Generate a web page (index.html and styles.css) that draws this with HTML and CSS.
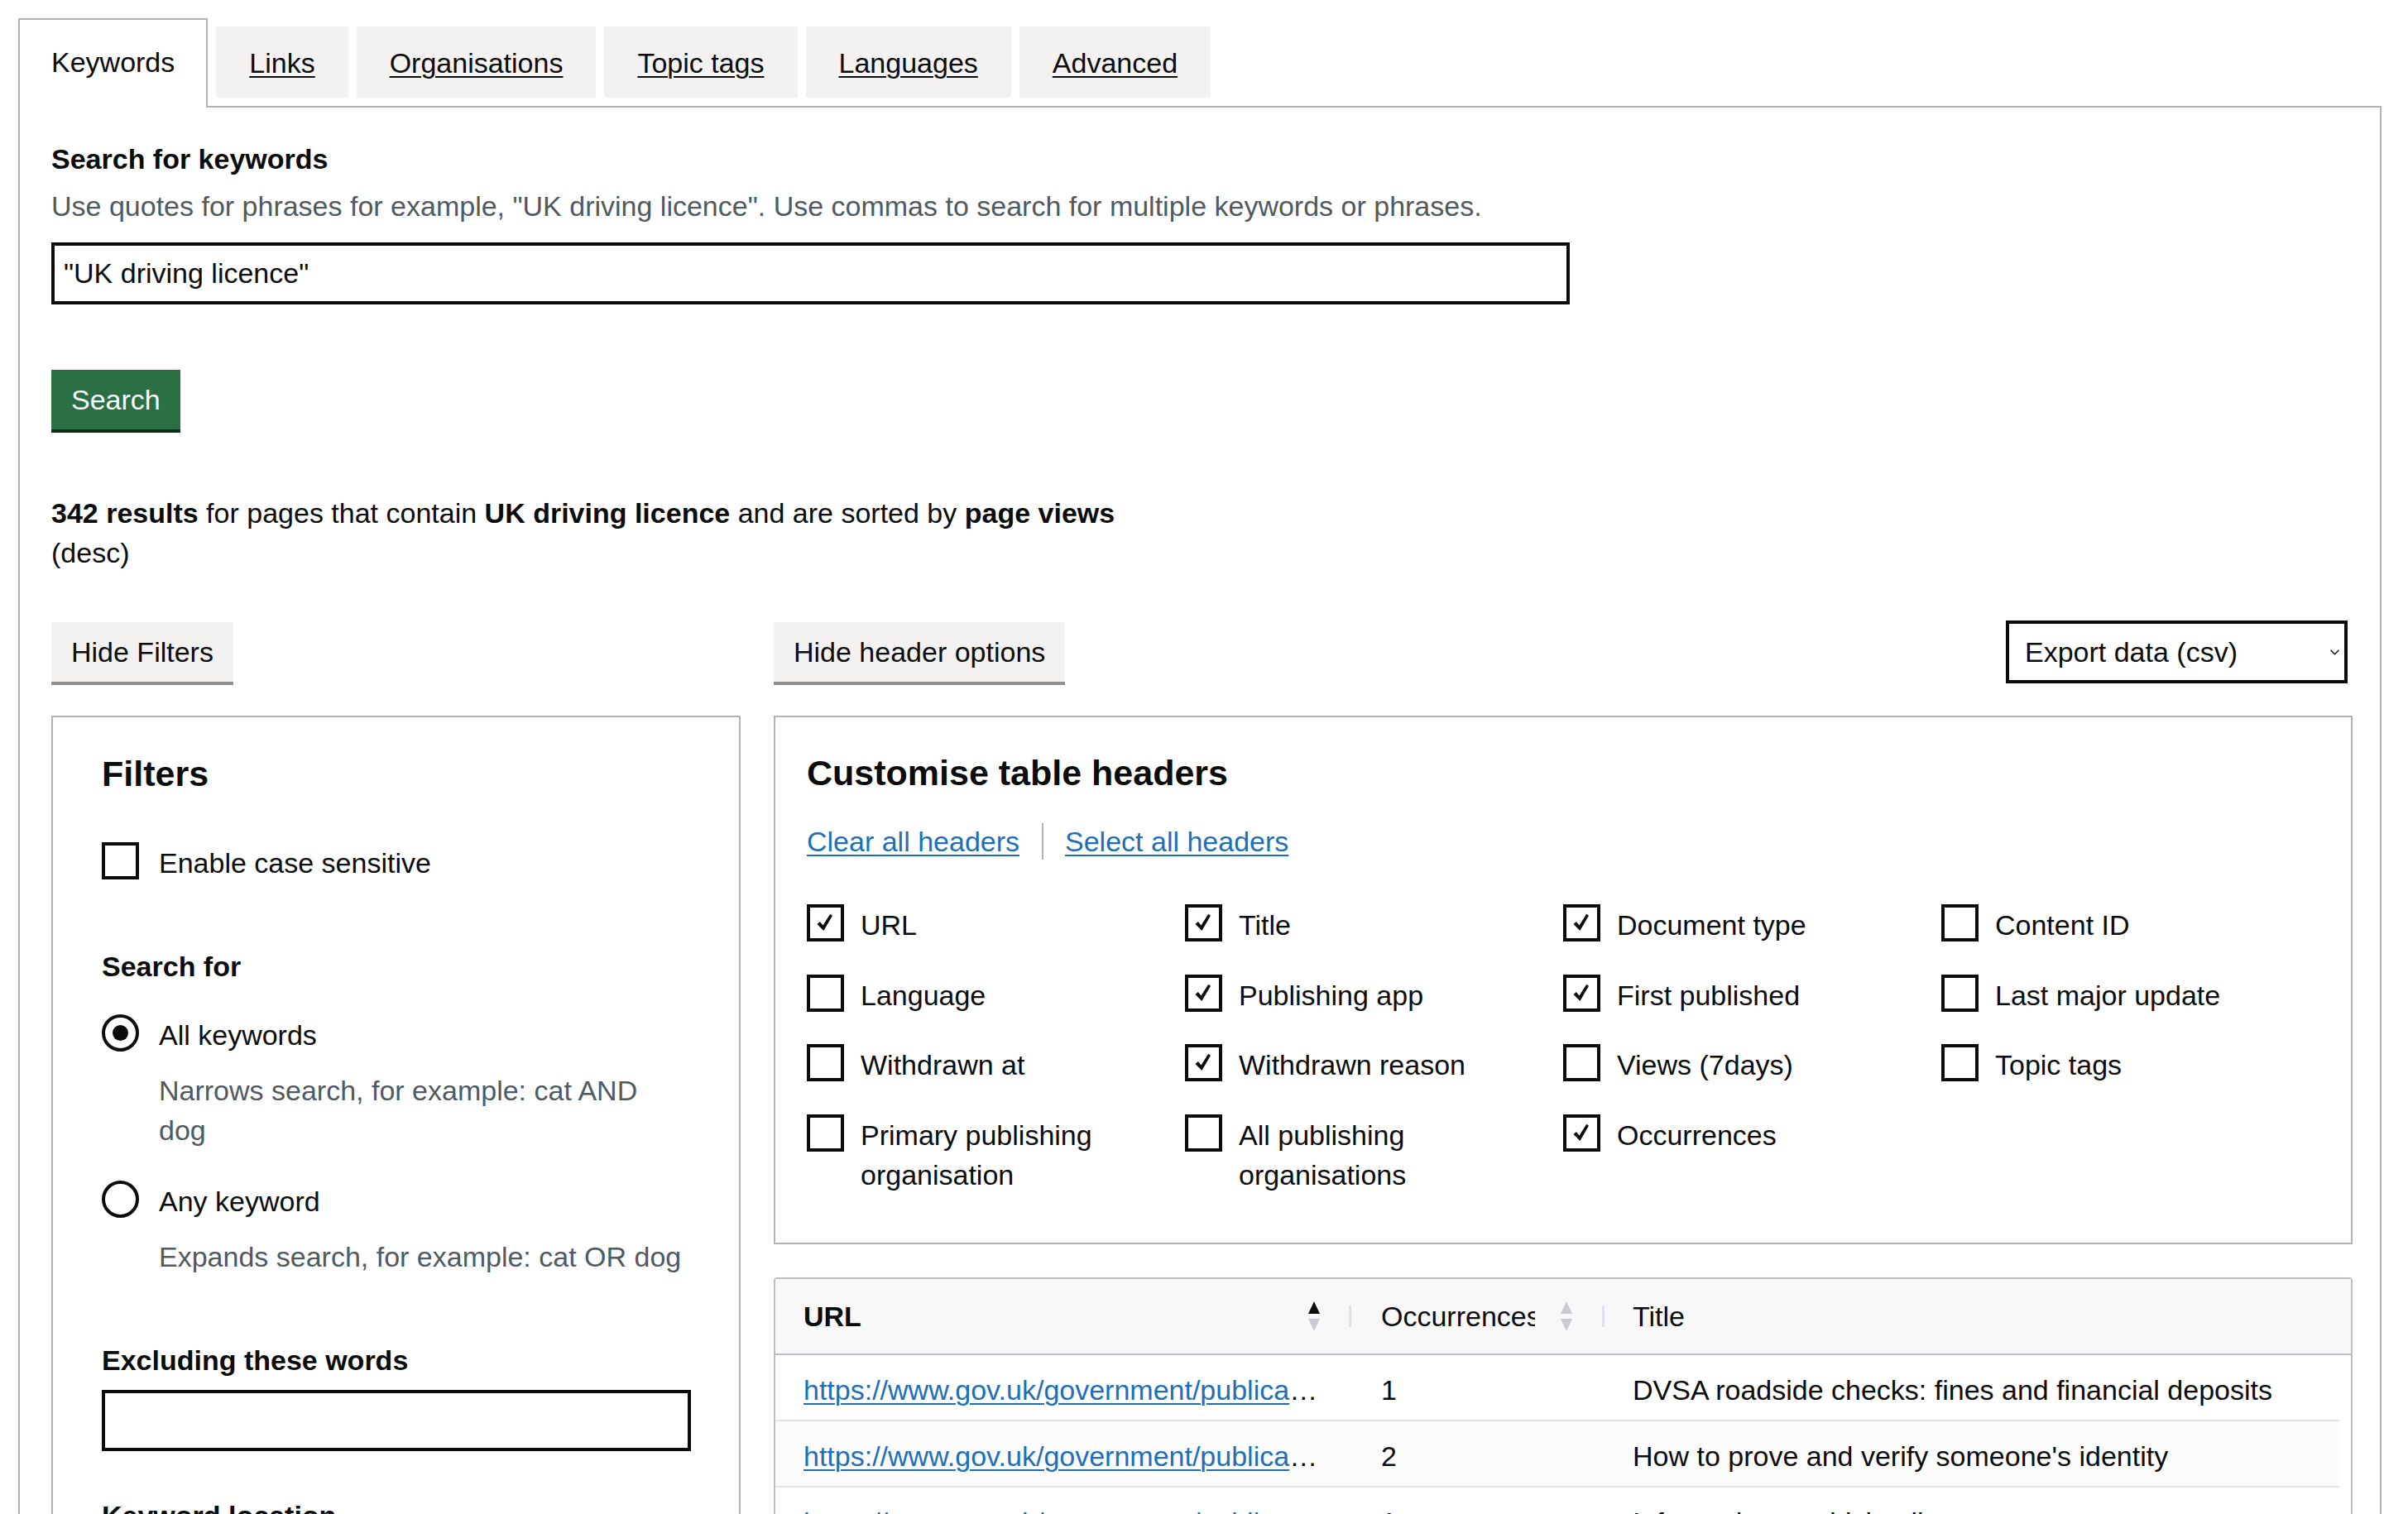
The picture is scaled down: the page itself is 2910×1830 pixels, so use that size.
FILE: index.html
```html
<!DOCTYPE html>
<html lang="en">
<head>
<meta charset="utf-8">
<title>Search for keywords</title>
<link rel="stylesheet" href="styles.css">
</head>
<body>
<div class="page">
  <ul class="tabs">
    <li class="tab tab--selected">Keywords</li>
    <li class="tab"><a class="tab__link" href="#">Links</a></li>
    <li class="tab"><a class="tab__link" href="#">Organisations</a></li>
    <li class="tab"><a class="tab__link" href="#">Topic tags</a></li>
    <li class="tab"><a class="tab__link" href="#">Languages</a></li>
    <li class="tab"><a class="tab__link" href="#">Advanced</a></li>
  </ul>

  <section class="panel">
    <form class="search-form">
      <label class="label label--bold" for="keywords">Search for keywords</label>
      <p class="hint hint--search">Use quotes for phrases for example, "UK driving licence". Use commas to search for multiple keywords or phrases.</p>
      <input class="text-input text-input--search" id="keywords" type="text" value="&quot;UK driving licence&quot;">
      <div class="form-actions">
        <button class="button button--primary" type="button">Search</button>
      </div>
    </form>

    <p class="summary"><strong>342 results</strong> for pages that contain <strong>UK driving licence</strong> and are sorted by <strong>page views</strong> (desc)</p>

    <div class="layout">
      <div class="toolbar toolbar--left">
        <button class="button button--secondary" type="button">Hide Filters</button>
      </div>
      <div class="toolbar toolbar--right">
        <button class="button button--secondary" type="button">Hide header options</button>
        <div class="export">
          <select class="select" aria-label="Export">
            <option>Export data (csv)</option>
          </select>
          <svg class="export__chevron" viewBox="0 0 10 6" width="11" height="7" aria-hidden="true"><path d="M0.5 0.5 L5 5 L9.5 0.5" fill="none" stroke="#0b0c0c" stroke-width="1.2"/></svg>
        </div>
      </div>

      <aside class="filters">
        <h2 class="heading">Filters</h2>
        <div class="choice choice--single">
          <span class="checkbox"></span>
          <span class="choice__label">Enable case sensitive</span>
        </div>

        <fieldset class="fieldset">
          <legend class="label label--bold legend">Search for</legend>
          <div class="choice">
            <span class="radio radio--checked"></span>
            <span class="choice__label">All keywords</span>
            <span class="choice__hint">Narrows search, for example: cat AND dog</span>
          </div>
          <div class="choice choice--second">
            <span class="radio"></span>
            <span class="choice__label">Any keyword</span>
            <span class="choice__hint">Expands search, for example: cat OR dog</span>
          </div>
        </fieldset>

        <label class="label label--bold label--exclude" for="exclude">Excluding these words</label>
        <input class="text-input text-input--exclude" id="exclude" type="text">

        <p class="label label--bold label--location">Keyword location</p>
      </aside>

      <div class="results">
        <div class="customise">
          <h2 class="heading">Customise table headers</h2>
          <div class="header-actions">
            <a class="link" href="#">Clear all headers</a>
            <span class="header-actions__sep"></span>
            <a class="link" href="#">Select all headers</a>
          </div>
          <div class="columns">
            <div class="col-choice"><span class="checkbox checkbox--checked"><svg viewBox="0 0 20 20"><path d="M2 11.2 L4.7 8.8 L7.6 12.4 L14.6 1.4 L16.8 2.9 L8.3 17.6 Z"/></svg></span><span class="col-choice__label">URL</span></div>
            <div class="col-choice"><span class="checkbox checkbox--checked"><svg viewBox="0 0 20 20"><path d="M2 11.2 L4.7 8.8 L7.6 12.4 L14.6 1.4 L16.8 2.9 L8.3 17.6 Z"/></svg></span><span class="col-choice__label">Title</span></div>
            <div class="col-choice"><span class="checkbox checkbox--checked"><svg viewBox="0 0 20 20"><path d="M2 11.2 L4.7 8.8 L7.6 12.4 L14.6 1.4 L16.8 2.9 L8.3 17.6 Z"/></svg></span><span class="col-choice__label">Document type</span></div>
            <div class="col-choice"><span class="checkbox"></span><span class="col-choice__label">Content ID</span></div>

            <div class="col-choice"><span class="checkbox"></span><span class="col-choice__label">Language</span></div>
            <div class="col-choice"><span class="checkbox checkbox--checked"><svg viewBox="0 0 20 20"><path d="M2 11.2 L4.7 8.8 L7.6 12.4 L14.6 1.4 L16.8 2.9 L8.3 17.6 Z"/></svg></span><span class="col-choice__label">Publishing app</span></div>
            <div class="col-choice"><span class="checkbox checkbox--checked"><svg viewBox="0 0 20 20"><path d="M2 11.2 L4.7 8.8 L7.6 12.4 L14.6 1.4 L16.8 2.9 L8.3 17.6 Z"/></svg></span><span class="col-choice__label">First published</span></div>
            <div class="col-choice"><span class="checkbox"></span><span class="col-choice__label">Last major update</span></div>

            <div class="col-choice"><span class="checkbox"></span><span class="col-choice__label">Withdrawn at</span></div>
            <div class="col-choice"><span class="checkbox checkbox--checked"><svg viewBox="0 0 20 20"><path d="M2 11.2 L4.7 8.8 L7.6 12.4 L14.6 1.4 L16.8 2.9 L8.3 17.6 Z"/></svg></span><span class="col-choice__label">Withdrawn reason</span></div>
            <div class="col-choice"><span class="checkbox"></span><span class="col-choice__label">Views (7days)</span></div>
            <div class="col-choice"><span class="checkbox"></span><span class="col-choice__label">Topic tags</span></div>

            <div class="col-choice"><span class="checkbox"></span><span class="col-choice__label">Primary publishing organisation</span></div>
            <div class="col-choice"><span class="checkbox"></span><span class="col-choice__label">All publishing organisations</span></div>
            <div class="col-choice"><span class="checkbox checkbox--checked"><svg viewBox="0 0 20 20"><path d="M2 11.2 L4.7 8.8 L7.6 12.4 L14.6 1.4 L16.8 2.9 L8.3 17.6 Z"/></svg></span><span class="col-choice__label">Occurrences</span></div>
          </div>
        </div>

        <div class="grid">
          <div class="grid__header">
            <div class="grid__hcell grid__hcell--url">
              <span class="grid__htext grid__htext--bold">URL</span>
              <svg class="sort" viewBox="0 0 16 36" aria-hidden="true"><path class="sort__up sort__up--active" d="M8 0 L15 15 L1 15 Z"/><path class="sort__down" d="M1 21 L15 21 L8 36 Z"/></svg>
            </div>
            <div class="grid__hcell grid__hcell--occ">
              <span class="grid__htext">Occurrences</span>
              <svg class="sort sort--narrow" viewBox="0 0 16 36" aria-hidden="true"><path class="sort__up" d="M8 0 L15 15 L1 15 Z"/><path class="sort__down" d="M1 21 L15 21 L8 36 Z"/></svg>
            </div>
            <div class="grid__hcell grid__hcell--title">
              <span class="grid__htext">Title</span>
            </div>
          </div>
          <div class="grid__body">
            <div class="grid__row">
              <div class="grid__cell grid__cell--url"><a class="link" href="#">https://www.gov.uk/government/publications/dvsa-roadside-checks-fines-and-financial-deposits</a></div>
              <div class="grid__cell grid__cell--occ">1</div>
              <div class="grid__cell grid__cell--title">DVSA roadside checks: fines and financial deposits</div>
            </div>
            <div class="grid__row grid__row--alt">
              <div class="grid__cell grid__cell--url"><a class="link" href="#">https://www.gov.uk/government/publications/proving-and-verifying-identity</a></div>
              <div class="grid__cell grid__cell--occ">2</div>
              <div class="grid__cell grid__cell--title">How to prove and verify someone's identity</div>
            </div>
            <div class="grid__row">
              <div class="grid__cell grid__cell--url"><a class="link" href="#">https://www.gov.uk/government/publications/ins57p-information-on-driving-licences</a></div>
              <div class="grid__cell grid__cell--occ">1</div>
              <div class="grid__cell grid__cell--title">Information on driving licences</div>
            </div>
          </div>
        </div>
      </div>
    </div>
  </section>
</div>
</body>
</html>
```

FILE: styles.css
```css
html {
  overflow: hidden;
}

body {
  margin: 0;
  background: #ffffff;
  color: #0b0c0c;
  font-family: "Liberation Sans", Arial, sans-serif;
  font-size: 34px;
  line-height: 48px;
}

.page {
  padding: 22px 32px 0 22px;
}

/* Tabs */
.tabs {
  display: flex;
  align-items: flex-start;
  gap: 10px;
  list-style: none;
  margin: 0;
  padding: 0;
  position: relative;
  z-index: 1;
}

.tab {
  margin-top: 10px;
  padding: 20px 40px 18px;
  background: #f3f2f1;
}

.tab__link {
  color: #0b0c0c;
  text-decoration: underline;
  text-decoration-thickness: 2px;
  text-underline-offset: 4px;
}

.tab--selected {
  margin-top: 0;
  margin-bottom: -2px;
  padding: 27px 38px 31px;
  background: #ffffff;
  border: 2px solid #b1b4b6;
  border-bottom: 0;
}

/* Panel */
.panel {
  border: 2px solid #b1b4b6;
  padding: 38px 33px 0 38px;
  min-height: 1800px;
}

.label {
  display: block;
  margin: 0;
}

.label--bold {
  font-weight: 700;
}

.hint {
  margin: 0;
  color: #505a5f;
}

.hint--search {
  margin: 9px 0 20px;
}

.text-input {
  display: block;
  box-sizing: border-box;
  border: 4px solid #0b0c0c;
  border-radius: 0;
  background: #ffffff;
  font-family: inherit;
  font-size: 34px;
  color: #0b0c0c;
  padding: 0 11px;
  outline: none;
}

.text-input--search {
  width: 1835px;
  height: 75px;
}

.form-actions {
  margin-top: 79px;
}

.button {
  display: inline-block;
  box-sizing: border-box;
  height: 72px;
  padding: 0 24px;
  border: 0;
  border-radius: 0;
  font-family: inherit;
  font-size: 34px;
  line-height: 72px;
  cursor: pointer;
}

.button--primary {
  background: #2a7043;
  color: #ffffff;
  box-shadow: 0 4px 0 #0f2d1a;
}

.button--secondary {
  background: #f3f2f1;
  color: #0b0c0c;
  box-shadow: 0 4px 0 #929191;
}

.summary {
  margin: 77px 0 0;
  max-width: 1350px;
}

/* Main layout */
.layout {
  display: grid;
  grid-template-columns: 833px 1fr;
  column-gap: 40px;
  row-gap: 39px;
  margin-top: 58px;
}

.toolbar--left {
  padding-top: 2px;
}

.toolbar--right {
  display: flex;
  justify-content: space-between;
  align-items: flex-start;
  padding-top: 2px;
}

.export {
  position: relative;
  margin-top: -2px;
  margin-right: 6px;
}

.select {
  display: block;
  box-sizing: border-box;
  width: 413px;
  height: 76px;
  padding: 0 40px 0 19px;
  border: 4px solid #0b0c0c;
  border-radius: 0;
  background: #ffffff;
  color: #0b0c0c;
  font-family: inherit;
  font-size: 34px;
  appearance: none;
  -webkit-appearance: none;
}

.export__chevron {
  position: absolute;
  right: 10px;
  top: 35px;
}

/* Filters */
.filters {
  border: 2px solid #b1b4b6;
  padding: 40px 58px 0 59px;
  min-height: 1000px;
}

.heading {
  margin: 0;
  font-size: 43px;
  line-height: 56px;
  font-weight: 700;
}

.choice {
  display: grid;
  grid-template-columns: 45px 1fr;
  column-gap: 24px;
  align-items: start;
}

.choice--single {
  margin-top: 55px;
}

.choice__label {
  padding-top: 1px;
}

.choice__hint {
  grid-column: 2;
  color: #505a5f;
  margin-top: 19px;
}

.choice--second {
  margin-top: 37px;
}

.checkbox {
  flex: none;
  display: flex;
  align-items: center;
  justify-content: center;
  box-sizing: border-box;
  width: 45px;
  height: 45px;
  border: 4px solid #0b0c0c;
  background: #ffffff;
}

.checkbox svg {
  width: 25px;
  height: 25px;
}

.checkbox svg path {
  fill: #0b0c0c;
}

.radio {
  display: flex;
  align-items: center;
  justify-content: center;
  box-sizing: border-box;
  width: 45px;
  height: 45px;
  border: 4px solid #0b0c0c;
  border-radius: 50%;
  background: #ffffff;
}

.radio--checked::before {
  content: "";
  width: 19px;
  height: 19px;
  border-radius: 50%;
  background: #0b0c0c;
}

.fieldset {
  margin: 77px 0 0;
  padding: 0;
  border: 0;
  min-width: 0;
}

.legend {
  padding: 0;
  margin-bottom: 34px;
}

.label--exclude {
  margin-top: 77px;
}

.text-input--exclude {
  width: 712px;
  height: 74px;
  margin-top: 12px;
}

.label--location {
  margin-top: 54px;
}

/* Customise box */
.customise {
  border: 2px solid #b1b4b6;
  padding: 39px 38px 58px;
}

.header-actions {
  display: flex;
  align-items: center;
  margin-top: 31px;
}

.header-actions__sep {
  width: 2px;
  height: 44px;
  background: #b1b4b6;
  margin: 0 26px 0 27px;
}

.link {
  color: #1d70b8;
  text-decoration: underline;
  text-decoration-thickness: 2px;
  text-underline-offset: 4px;
}

.columns {
  display: grid;
  grid-template-columns: repeat(4, 1fr);
  row-gap: 35.5px;
  margin-top: 52px;
}

.col-choice {
  display: flex;
  align-items: flex-start;
  gap: 20px;
}

.col-choice__label {
  padding-top: 1px;
}

/* Data grid */
.grid {
  margin-top: 40px;
  border: 2px solid #babfc7;
  border-radius: 4px 4px 0 0;
  min-height: 400px;
}

.grid__header {
  display: grid;
  grid-template-columns: 696px 306px 1fr;
  height: 90px;
  background: #f8f8f8;
  border-bottom: 2px solid #babfc7;
}

.grid__hcell {
  position: relative;
  display: flex;
  align-items: center;
  min-width: 0;
}

.grid__hcell--url {
  padding: 0 37px 0 34px;
}

.grid__hcell--occ {
  padding: 0 38px 0 36px;
}

.grid__hcell--title {
  padding: 0 34px;
}

.grid__hcell--url::after,
.grid__hcell--occ::after {
  content: "";
  position: absolute;
  right: 0;
  top: 32px;
  width: 3px;
  height: 26px;
  background: #dde2eb;
}

.grid__htext {
  flex: 1;
  min-width: 0;
  overflow: hidden;
  white-space: nowrap;
}

.grid__htext--bold {
  font-weight: 700;
}

.sort {
  flex: none;
  width: 16px;
  height: 36px;
  margin-left: 21px;
}

.sort--narrow {
  margin-left: 30px;
}

.sort__up,
.sort__down {
  fill: #c8cbcf;
}

.sort__up--active {
  fill: #0b0c0c;
}

.grid__body {
  margin-right: 14px;
}

.grid__row {
  display: grid;
  grid-template-columns: 696px 306px 1fr;
  height: 80px;
  box-sizing: border-box;
  padding-top: 18px;
  border-bottom: 2px solid #dde2eb;
  background: #ffffff;
}

.grid__row--alt {
  background: #fcfcfc;
}

.grid__cell {
  min-width: 0;
  white-space: nowrap;
  overflow: hidden;
  text-overflow: ellipsis;
}

.grid__cell--url {
  padding: 0 36px 0 34px;
}

.grid__cell--occ {
  padding: 0 36px;
}

.grid__cell--title {
  padding: 0 34px;
}
```
